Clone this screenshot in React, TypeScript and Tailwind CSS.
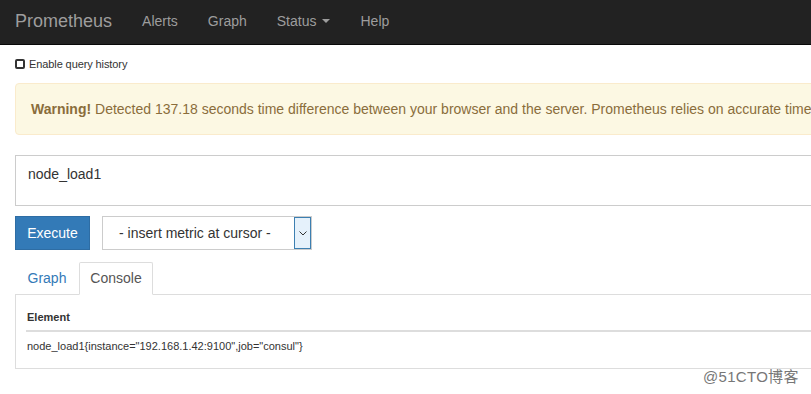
import React from "react";

const font = { fontFamily: '"Liberation Sans", Arial, sans-serif' };

function NavBar() {
  return (
    <div className="h-[45px] pb-[2px] bg-[#222] border-b border-[#080808] flex items-center text-[#9d9d9d]">
      <span className="px-[15px] text-[18px]">Prometheus</span>
      <span className="px-[15px] text-[14px]">Alerts</span>
      <span className="px-[15px] text-[14px]">Graph</span>
      <span className="px-[15px] text-[14px] flex items-center">
        Status
        <span className="ml-[6px] w-0 h-0 border-x-[4px] border-x-transparent border-t-[4px] border-t-[#9d9d9d]" />
      </span>
      <span className="px-[15px] text-[14px]">Help</span>
    </div>
  );
}

export default function App() {
  return (
    <div className="w-[811px] h-[394px] overflow-hidden bg-white text-[#333] relative" style={font}>
      <NavBar />
      <div className="w-[1100px] px-[15px]">
        <div className="flex items-center gap-[4px] mt-[10px] h-[18px] text-[11px] tracking-[-0.1px] text-[#333]">
          <span className="w-[10px] h-[10px] rounded-[2px] border-2 border-[#333]" />
          <span>Enable query history</span>
        </div>
        <div className="mt-[10px] h-[52px] flex items-center pl-[15px] bg-[#fcf8e3] border border-[#faebcc] rounded text-[#8a6d3b] text-[14px] whitespace-nowrap">
          <b>Warning!</b>&nbsp;Detected 137.18 seconds time difference between your browser and the server. Prometheus relies on accurate time and time drift might cause unexpected query results.
        </div>
        <div className="mt-[20px] h-[51px] border border-[#ccc] px-[12px] pt-[8px] text-[14px] text-[#333]">
          node_load1
        </div>
        <div className="mt-[10px] flex items-center gap-[12px]">
          <div className="w-[75px] h-[34px] bg-[#337ab7] text-white text-[14px] flex items-center justify-center border border-[#2e6da4]">
            Execute
          </div>
          <div className="w-[210px] h-[34px] border border-[#ccc] flex items-stretch text-[14px] text-[#333]">
            <div className="flex-1 flex items-center pl-[16px]">- insert metric at cursor -</div>
            <div className="w-[17px] bg-[#e5f1fb] border border-[#3c7fb1] flex items-center justify-center">
              <svg width="8" height="5" viewBox="0 0 8 5">
                <path d="M0.5 0.5 L4 4 L7.5 0.5" fill="none" stroke="#333" strokeWidth="1" />
              </svg>
            </div>
          </div>
        </div>
        <div className="mt-[12px] flex h-[33px] border-b border-[#ddd] text-[14px]">
          <div className="w-[64px] flex items-center justify-center text-[#337ab7]">Graph</div>
          <div className="w-[74px] flex items-center justify-center text-[#555] bg-white border border-[#ddd] border-b-white mb-[-1px] rounded-t-[2px]">
            Console
          </div>
        </div>
        <div className="h-[74px] border border-t-0 border-[#ddd] px-[10px] pt-[14px] text-[11px]">
          <div className="font-bold text-[#333] pb-[6px] px-[1px] border-b-2 border-[#ddd] h-[23px]">Element</div>
          <div className="pt-[6px] px-[1px] text-[#333]">node_load1{'{'}instance="192.168.1.42:9100",job="consul"{'}'}</div>
        </div>
      </div>
      <div
        className="absolute left-[703px] top-[366px] text-[15px] tracking-[0.3px] text-[#777]"
        style={{ fontFamily: '"Liberation Sans", "Noto Sans CJK SC", sans-serif', textShadow: "0 0 1px #fff" }}
      >
        @51CTO博客
      </div>
    </div>
  );
}
